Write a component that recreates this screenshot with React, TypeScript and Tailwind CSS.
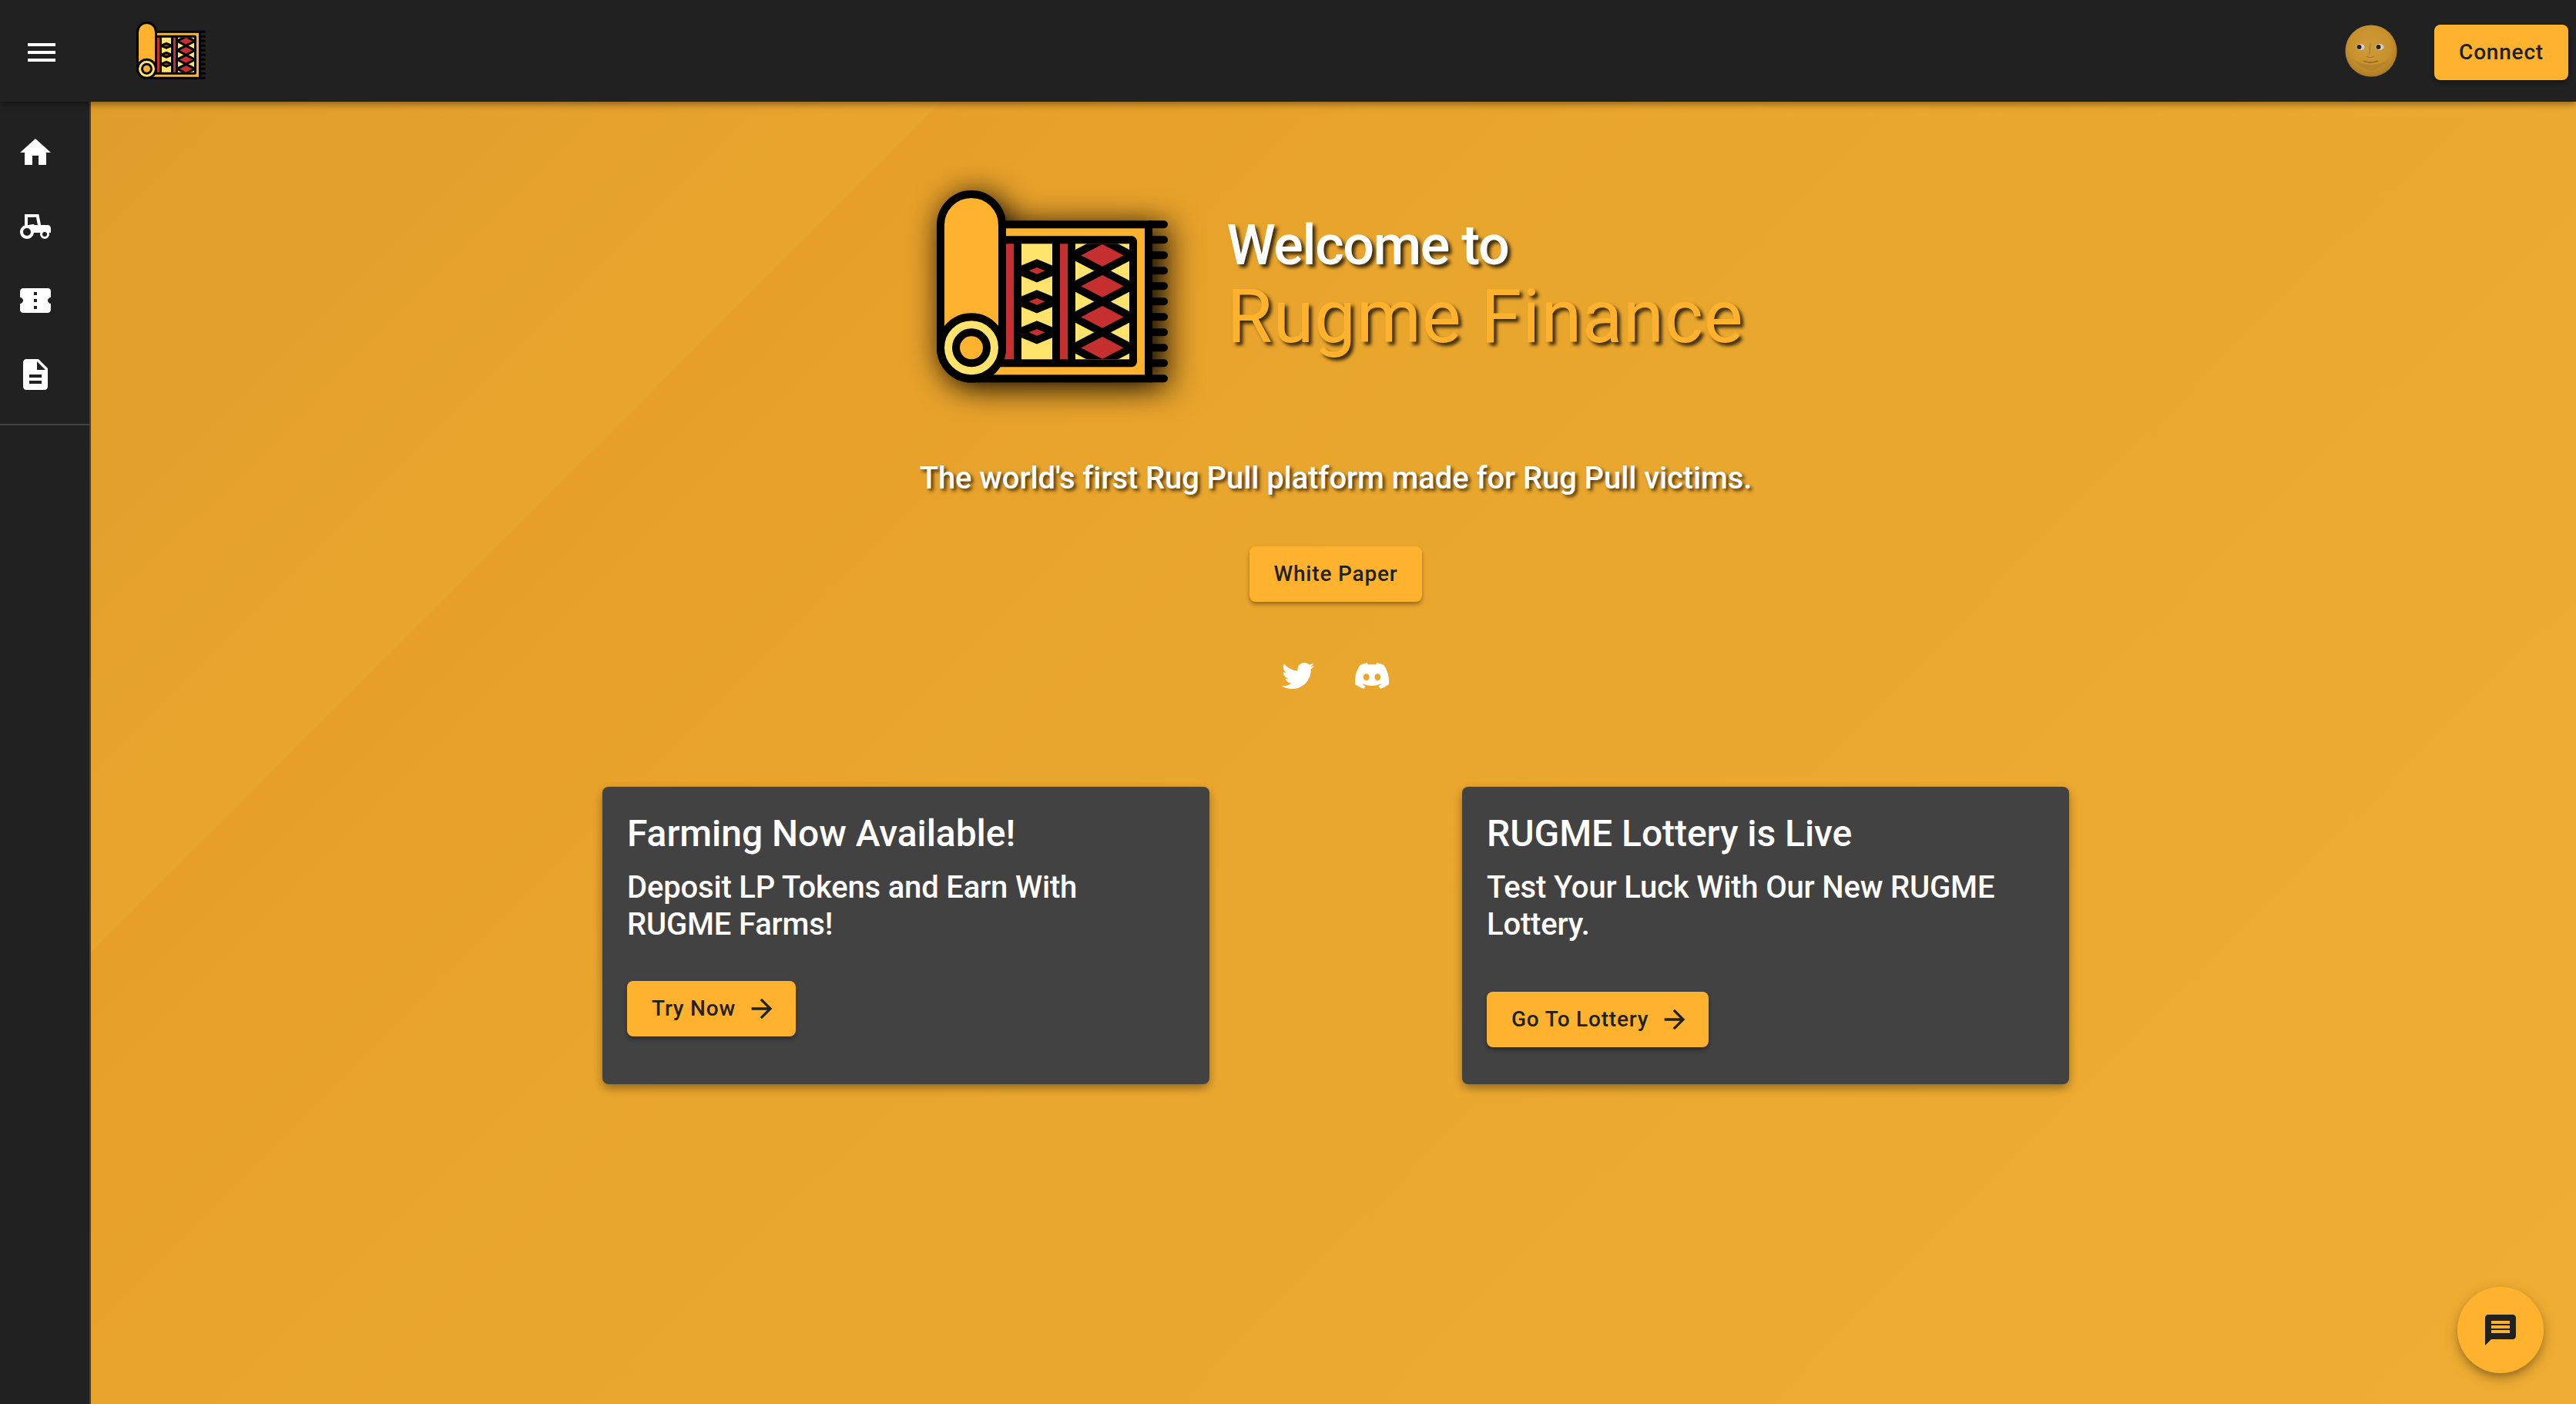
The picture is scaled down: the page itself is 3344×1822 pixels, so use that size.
import React from "react";
import { MdMenu, MdHome, MdConfirmationNumber, MdDescription, MdArrowForward, MdMessage } from "react-icons/md";
import { FaTwitter, FaDiscord } from "react-icons/fa";

function Tractor({ className }: { className?: string }) {
  return (
    <svg viewBox="0 0 24 24" fill="currentColor" className={className}>
      <path d="M5,4V11.26C3.2,11.9 2,13.6 2,15.5C2,18 4,20 6.5,20C8.79,20 10.71,18.28 10.97,16H15.17C15.06,16.32 15,16.66 15,17A3,3 0 0,0 18,20A3,3 0 0,0 21,17C21,16.66 20.94,16.32 20.82,16H22V13C22,11.89 21.11,11 20,11H15.53L14.19,4H5M7,6H12.5L13.46,11H11.45C10.45,9.76 8.64,11 7,11V6M6.5,13A2.5,2.5 0 0,1 9,15.5A2.5,2.5 0 0,1 6.5,18A2.5,2.5 0 0,1 4,15.5A2.5,2.5 0 0,1 6.5,13M18,15.5A1.5,1.5 0 0,1 19.5,17A1.5,1.5 0 0,1 18,18.5A1.5,1.5 0 0,1 16.5,17A1.5,1.5 0 0,1 18,15.5Z" />
    </svg>
  );
}

function Rug({ className, id }: { className?: string; id: string }) {
  const orange = "#ffb22e";
  const yellow = "#ffe36c";
  const red = "#c62f2f";
  const fringes = [215, 275, 335, 395, 455, 515, 575, 635, 695, 755, 815];
  return (
    <svg viewBox="108 82 900 750" className={className}>
      <defs>
        <clipPath id={id + "a"}><rect x="438" y="290" width="120" height="450" /></clipPath>
        <clipPath id={id + "b"}><rect x="648" y="290" width="210" height="450" /></clipPath>
      </defs>
      {fringes.map((y) => (
        <line key={y} x1="940" y1={y} x2="993" y2={y} stroke="#000" strokeWidth="30" strokeLinecap="round" />
      ))}
      <rect x="240" y="215" width="693" height="600" fill={orange} stroke="#000" strokeWidth="30" />
      <rect x="300" y="275" width="573" height="480" rx="6" fill="#000" stroke="#000" strokeWidth="30" />
      <rect x="350" y="290" width="58" height="450" fill={red} />
      <rect x="588" y="290" width="30" height="450" fill={red} />
      <rect x="438" y="290" width="120" height="450" fill={yellow} />
      <rect x="648" y="290" width="210" height="450" fill={yellow} />
      <g clipPath={`url(#${id}a)`}>
        {[395, 515, 635].map((y) => (
          <polygon key={y} points={`428,${y} 498,${y - 29} 568,${y} 498,${y + 29}`} fill={red} stroke="#000" strokeWidth="30" />
        ))}
      </g>
      <g clipPath={`url(#${id}b)`}>
        {[335, 455, 575, 695].map((y) => (
          <polygon key={y} points={`638,${y} 753,${y - 60} 868,${y} 753,${y + 60}`} fill={red} stroke="#000" strokeWidth="30" />
        ))}
      </g>
      <rect x="123" y="97" width="240" height="718" rx="120" fill={orange} stroke="#000" strokeWidth="30" />
      <circle cx="243" cy="695" r="120" fill={yellow} stroke="#000" strokeWidth="30" />
      <circle cx="243" cy="695" r="60" fill={orange} stroke="#000" strokeWidth="30" />
    </svg>
  );
}

function Moon() {
  return (
    <svg viewBox="0 0 68 68" className="w-[68px] h-[68px] -mt-[4px]">
      <defs>
        <radialGradient id="moon" cx="48%" cy="42%" r="60%">
          <stop offset="0%" stopColor="#cf9a3c" />
          <stop offset="65%" stopColor="#c8912c" />
          <stop offset="100%" stopColor="#a87a26" />
        </radialGradient>
      </defs>
      <circle cx="34" cy="34" r="33.5" fill="url(#moon)" />
      <ellipse cx="20" cy="29" rx="5.5" ry="4" fill="#d6d2c8" />
      <ellipse cx="45" cy="29" rx="5.5" ry="4" fill="#d6d2c8" />
      <circle cx="18.5" cy="29" r="3" fill="#222" />
      <circle cx="43.5" cy="29" r="3" fill="#222" />
      <path d="M33 24 L32 38 M28 41 Q33 44 38 41" fill="none" stroke="#a87a26" strokeWidth="1.2" />
      <path d="M24 47 Q33 51 43 47" fill="none" stroke="#96691e" strokeWidth="1.4" />
      <path d="M10 44 Q18 56 34 60 Q50 56 58 44 Q48 52 34 52 Q20 52 10 44Z" fill="#b5842a" />
    </svg>
  );
}

const btn =
  "inline-flex items-center justify-center h-[72px] rounded-lg bg-[#ffb22e] text-[#212121] text-[28px] font-medium tracking-[0.8px] shadow-[0_3px_6px_-1px_rgba(0,0,0,0.3),0_4px_5px_0_rgba(0,0,0,0.14)]";

function Card({ title, body, action, gap }: { title: string; body: string; action: string; gap: string }) {
  return (
    <div className="w-[788px] h-[386px] rounded-lg bg-[#424242] text-white px-8 pt-[32px] shadow-[0_6px_14px_-2px_rgba(0,0,0,0.3),0_4px_12px_0_rgba(0,0,0,0.14)]">
      <h2 className="text-[48px] leading-[58px] font-medium tracking-[-0.05px]">{title}</h2>
      <p className="mt-[17px] text-[40px] leading-[48px] font-medium tracking-[-0.18px]">{body}</p>
      <button className={`${btn} pl-8 pr-6 ${gap}`}>
        {action}
        <MdArrowForward className="ml-[14px] text-[40px]" />
      </button>
    </div>
  );
}

export default function App() {
  return (
    <div className="relative h-screen w-full overflow-hidden flex flex-col bg-[#212121] font-[Roboto,sans-serif]">
      <header className="relative z-10 h-[132px] shrink-0 flex items-center pt-[4px] bg-[#212121] shadow-[0_4px_8px_0_rgba(0,0,0,0.35)]">
        <MdMenu className="ml-[30px] text-white text-[48px]" />
        <Rug id="h" className="ml-[99px] w-[90px] h-[75px] -mt-[6px]" />
        <div className="ml-auto flex items-center">
          <Moon />
          <button className={`${btn} w-[174px] ml-[48px] mr-[10px]`}>Connect</button>
        </div>
      </header>
      <div className="flex-1 flex min-h-0">
        <aside className="w-[118px] shrink-0 border-r-2 border-[#424242] bg-[#212121]">
          <nav className="pt-[18px] pb-4 border-b-2 border-[#424242] flex flex-col text-white">
            {[MdHome, Tractor, MdConfirmationNumber, MdDescription].map((Icon, i) => (
              <div key={i} className="h-[96px] pl-[22px] flex items-center">
                <Icon className="text-[48px] w-[48px] h-[48px]" />
              </div>
            ))}
          </nav>
        </aside>
        <main className="relative flex-1 flex flex-col items-center pt-[115px] pl-[6px] bg-[linear-gradient(135deg,#e09d2b_0%,#e8a42d_22.4%,#e79f29_22.5%,#e9a62d_42%,#eead33_100%)]">
          <div className="flex items-center pl-[12px]">
            <Rug id="b" className="w-[300px] h-[250px] drop-shadow-[6px_6px_20px_rgba(0,0,0,1)]" />
            <div className="ml-[76px] flex flex-col -mt-[6px]">
              <span className="text-[72px] leading-[84px] font-medium tracking-[-1.5px] text-white [text-shadow:4px_4px_4px_rgba(0,0,0,0.75)]">Welcome to</span>
              <span className="text-[96px] leading-[100px] tracking-[0.8px] text-[#ffb22e] [text-shadow:4px_4px_4px_rgba(0,0,0,0.75)]">Rugme Finance</span>
            </div>
          </div>
          <p className="mt-[100px] text-[40px] leading-[48px] font-medium tracking-[-0.1px] text-white [text-shadow:3px_3px_4px_rgba(0,0,0,0.7)]">
            The world's first Rug Pull platform made for Rug Pull victims.
          </p>
          <button className={`${btn} w-[224px] mt-[64px]`}>White Paper</button>
          <div className="mt-[72px] flex items-center gap-[51px] text-white">
            <FaTwitter className="text-[42px]" />
            <FaDiscord className="text-[48px]" />
          </div>
          <div className="mt-[120px] flex gap-[328px]">
            <Card title="Farming Now Available!" body="Deposit LP Tokens and Earn With RUGME Farms!" action="Try Now" gap="mt-[49px]" />
            <Card title="RUGME Lottery is Live" body="Test Your Luck With Our New RUGME Lottery." action="Go To Lottery" gap="mt-[63px]" />
          </div>
          <button className="absolute right-[42px] bottom-[40px] w-[112px] h-[112px] rounded-full bg-[#ffb22e] text-[#212121] flex items-center justify-center shadow-[0_6px_12px_-2px_rgba(0,0,0,0.3),0_6px_20px_0_rgba(0,0,0,0.14)]">
            <MdMessage className="text-[48px]" />
          </button>
        </main>
      </div>
    </div>
  );
}
